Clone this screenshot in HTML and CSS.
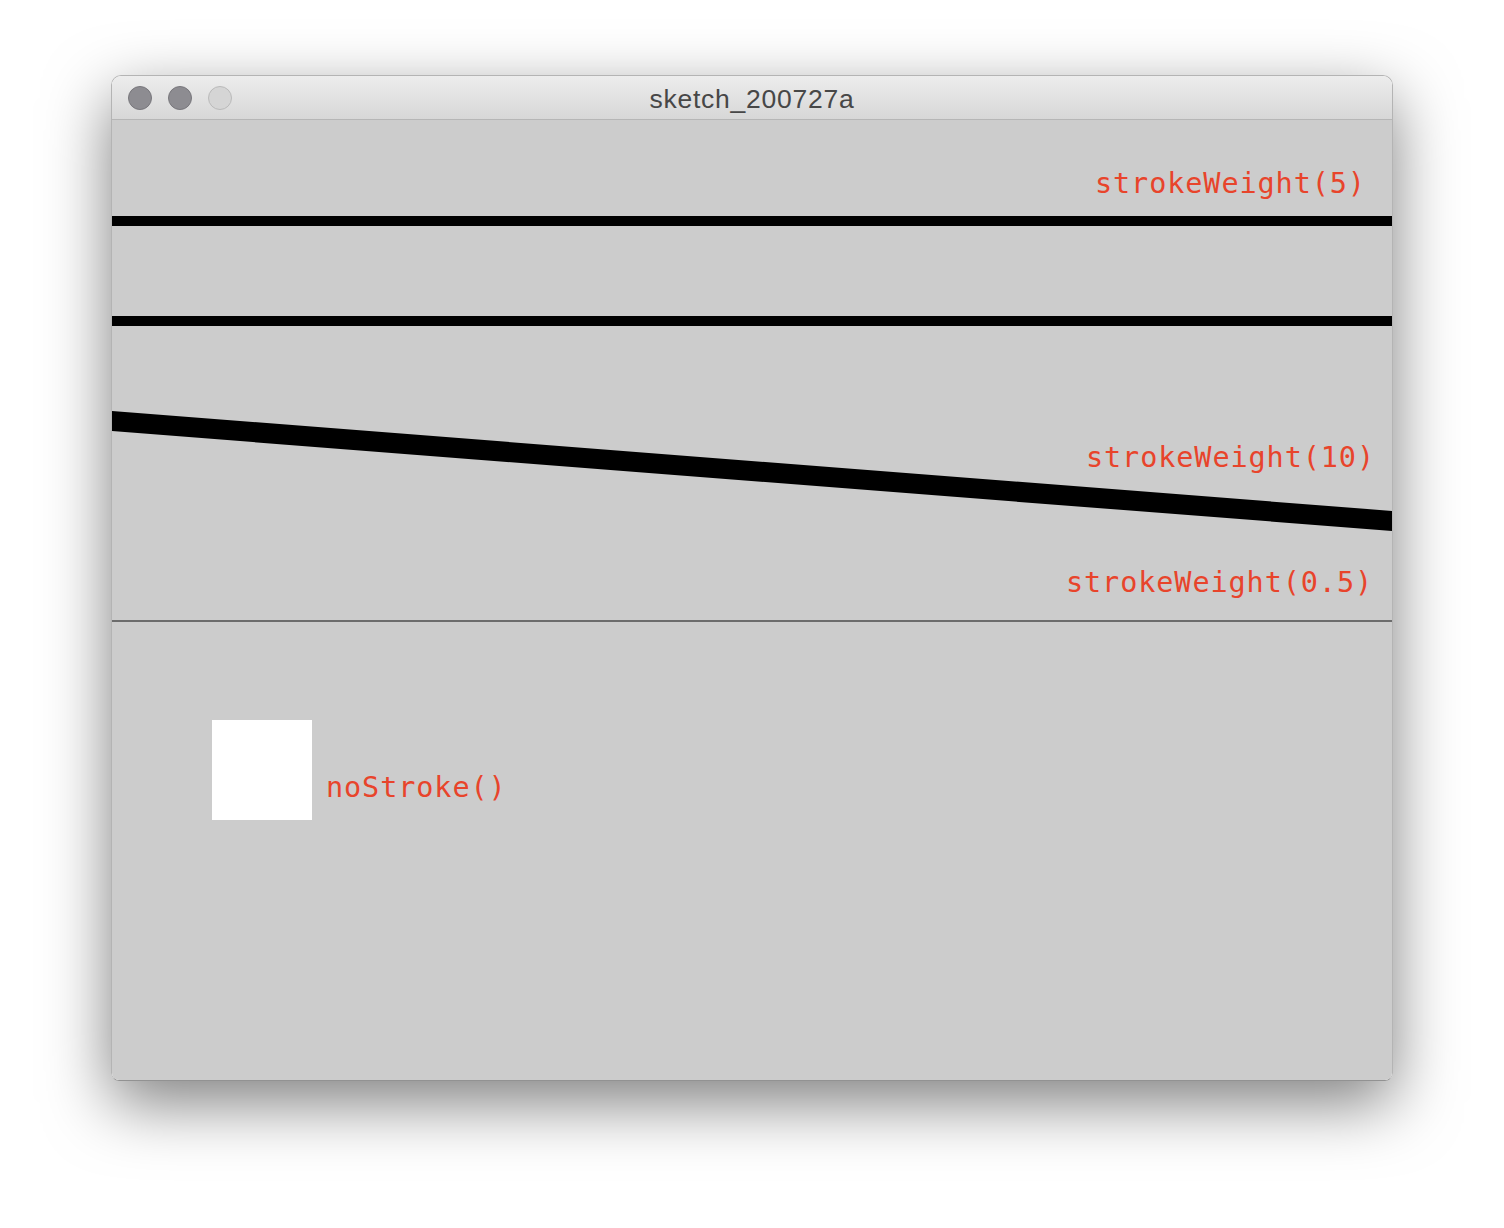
FILE: index.html
```html
<!DOCTYPE html>
<html lang="en">
<head>
    <meta charset="UTF-8">
    <title>sketch_200727a</title>
    <link rel="stylesheet" href="styles.css">
</head>
<body>
    <div class="desktop">
        <div class="window">
            <div class="titlebar">
                <div class="lights">
                    <span class="light dark"></span>
                    <span class="light dark"></span>
                    <span class="light off"></span>
                </div>
                <div class="title">sketch_200727a</div>
                <div></div>
            </div>

            <!-- sketch canvas, 640x480 drawn at 2x -->
            <svg class="canvas" width="1280" height="960" viewBox="0 0 1280 960">
                <rect x="0" y="96" width="1280" height="10" fill="#000"/>
                <rect x="0" y="196" width="1280" height="10" fill="#000"/>
                <line x1="-20" y1="299.5" x2="1300" y2="402.5" stroke="#000" stroke-width="20"/>
                <rect x="0" y="500" width="1280" height="2" fill="#6c6c6c"/>
                <rect x="100" y="600" width="100" height="100" fill="#fff"/>

                <text class="label" x="983" y="73">strokeWeight(5)</text>
                <text class="label" x="974" y="347">strokeWeight(10)</text>
                <text class="label" x="954" y="472">strokeWeight(0.5)</text>
                <text class="label" x="214" y="677">noStroke()</text>
            </svg>
        </div>
    </div>
</body>
</html>
```

FILE: styles.css
```css
/* Basic reset */
* {
    margin: 0;
    padding: 0;
    box-sizing: border-box;
}

body {
    background-color: #fff;
    font-family: 'Liberation Sans', Arial, sans-serif;
}

.desktop {
    padding: 75px 0 0 111px;
    height: 1228px;
}

/* Window frame */
.window {
    width: 1282px;
    border: 1px solid #b4b4b4;
    border-bottom-color: #929292;
    border-radius: 10px 10px 8px 8px;
    overflow: hidden;
    box-shadow: 0 22px 65px rgba(0, 0, 0, 0.5);
}

.titlebar {
    height: 44px;
    display: grid;
    grid-template-columns: 1fr auto 1fr;
    align-items: center;
    background: linear-gradient(#ededed, #d7d7d7);
    border-bottom: 1px solid #b6b6b6;
}

.lights {
    display: flex;
    gap: 16px;
    padding-left: 16px;
}

.light {
    width: 24px;
    height: 24px;
    border-radius: 50%;
}

.light.dark {
    background-color: #8d8c91;
    border: 1px solid #78777c;
}

.light.off {
    background-color: #d5d5d5;
    border: 1px solid #bababa;
}

.title {
    padding-top: 3px;
    font-size: 26.5px;
    letter-spacing: 0.75px;
    color: #474747;
}

/* Canvas */
.canvas {
    display: block;
    background-color: #cccccc;
}

.label {
    font-family: 'DejaVu Sans Mono', monospace;
    font-size: 28.5px;
    letter-spacing: 0.9px;
    fill: #e8442b;
}
```
